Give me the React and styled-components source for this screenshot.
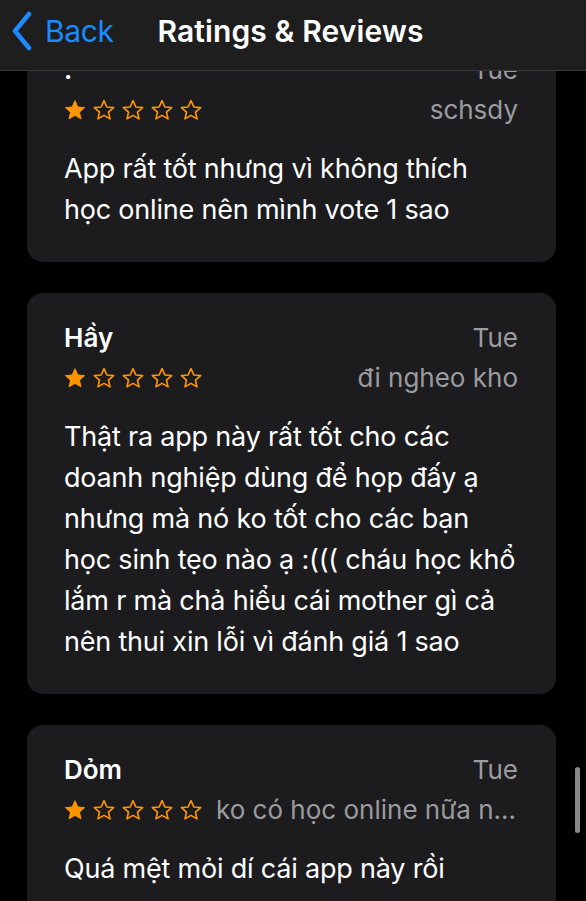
import React from "react";
import styled, { createGlobalStyle } from "styled-components";

const GlobalStyle = createGlobalStyle`
  html, body {
    margin: 0;
    padding: 0;
    background: #000;
    overflow: hidden;
  }
  body {
    font-family: Inter, "Noto Sans", "DejaVu Sans", sans-serif;
    -webkit-font-smoothing: antialiased;
  }
`;

const reviews = [
  {
    name: ".",
    date: "Tue",
    title: "schsdy",
    stars: 1,
    body: "App rất tốt nhưng vì không thích học online nên mình vote 1 sao",
  },
  {
    name: "Hầy",
    date: "Tue",
    title: "đi ngheo kho",
    stars: 1,
    body:
      "Thật ra app này rất tốt cho các doanh nghiệp dùng để họp đấy ạ nhưng mà nó ko tốt cho các bạn học sinh tẹo nào ạ :((( cháu học khổ lắm r mà chả hiểu cái mother gì cả nên thui xin lỗi vì đánh giá 1 sao",
  },
  {
    name: "Dỏm",
    date: "Tue",
    title: "ko có học online nữa nhé",
    stars: 1,
    body: "Quá mệt mỏi dí cái app này rồi",
  },
];

const Screen = styled.div`
  width: 586px;
  height: 901px;
  overflow: hidden;
  background: #000;
`;

const NavBar = styled.header`
  position: fixed;
  top: 0;
  left: 0;
  right: 0;
  height: 71px;
  z-index: 10;
  display: flex;
  align-items: center;
  padding-bottom: 8px;
  background: #1e1e1f;
  border-bottom: 1px solid #38383a;
  box-sizing: border-box;
`;

const BackButton = styled.button`
  display: flex;
  align-items: center;
  gap: 12px;
  padding: 0 0 0 11px;
  background: none;
  border: none;
  color: #1a8cff;
  font-family: inherit;
  font-size: 30px;
  letter-spacing: -0.4px;
  cursor: pointer;
`;

const NavTitle = styled.h1`
  margin: 0 0 0 44px;
  color: #fff;
  font-size: 30px;
  font-weight: 600;
  letter-spacing: 0.1px;
`;

const List = styled.main`
  display: flex;
  flex-direction: column;
  gap: 31px;
  padding: 25px 30px 40px 27px;
`;

const Card = styled.article`
  background: #1c1c1e;
  border-radius: 16px;
  padding: 25px 38px 32px 37px;
`;

const Row = styled.div`
  display: flex;
  align-items: center;
  justify-content: space-between;
  gap: 14px;
`;

const Name = styled.span`
  color: #fff;
  font-size: 26px;
  font-weight: 600;
  line-height: 34px;
`;

const Meta = styled.span`
  color: #9b9b9f;
  font-size: 26px;
  line-height: 40px;
  white-space: nowrap;
  overflow: hidden;
  text-overflow: ellipsis;
  min-width: 0;
`;

const Stars = styled.div`
  display: flex;
  gap: 7px;
  flex-shrink: 0;
`;

const Body = styled.p`
  margin: 18px -4px 0 0;
  color: #fff;
  font-size: 27px;
  line-height: 41px;
  letter-spacing: -0.2px;
`;

const Scrollbar = styled.div`
  position: fixed;
  right: 6px;
  top: 767px;
  width: 5px;
  height: 66px;
  border-radius: 3px;
  background: #8a8a8c;
`;

function Chevron() {
  return (
    <svg width="22" height="40" viewBox="0 0 22 40">
      <path
        d="M18 3 L4 20 L18 37"
        fill="none"
        stroke="#1a8cff"
        strokeWidth="4.5"
        strokeLinecap="round"
        strokeLinejoin="round"
      />
    </svg>
  );
}

function Star({ filled }) {
  return (
    <svg width="22" height="22" viewBox="0 0 24 24">
      <path
        d="M12 1.8l3.1 6.9 7.4.7-5.6 5 1.7 7.3L12 17.9l-6.6 3.8 1.7-7.3-5.6-5 7.4-.7z"
        fill={filled ? "#ff9500" : "none"}
        stroke="#ff9500"
        strokeWidth={filled ? 1 : 1.8}
        strokeLinejoin="round"
      />
    </svg>
  );
}

function Review({ review }) {
  return (
    <Card>
      <Row>
        <Name>{review.name}</Name>
        <Meta>{review.date}</Meta>
      </Row>
      <Row>
        <Stars>
          {[1, 2, 3, 4, 5].map((n) => (
            <Star key={n} filled={n <= review.stars} />
          ))}
        </Stars>
        <Meta>{review.title}</Meta>
      </Row>
      <Body>{review.body}</Body>
    </Card>
  );
}

export default function App() {
  return (
    <Screen>
      <GlobalStyle />
      <NavBar>
        <BackButton>
          <Chevron />
          Back
        </BackButton>
        <NavTitle>Ratings &amp; Reviews</NavTitle>
      </NavBar>
      <List>
        {reviews.map((r, i) => (
          <Review key={i} review={r} />
        ))}
      </List>
      <Scrollbar />
    </Screen>
  );
}
